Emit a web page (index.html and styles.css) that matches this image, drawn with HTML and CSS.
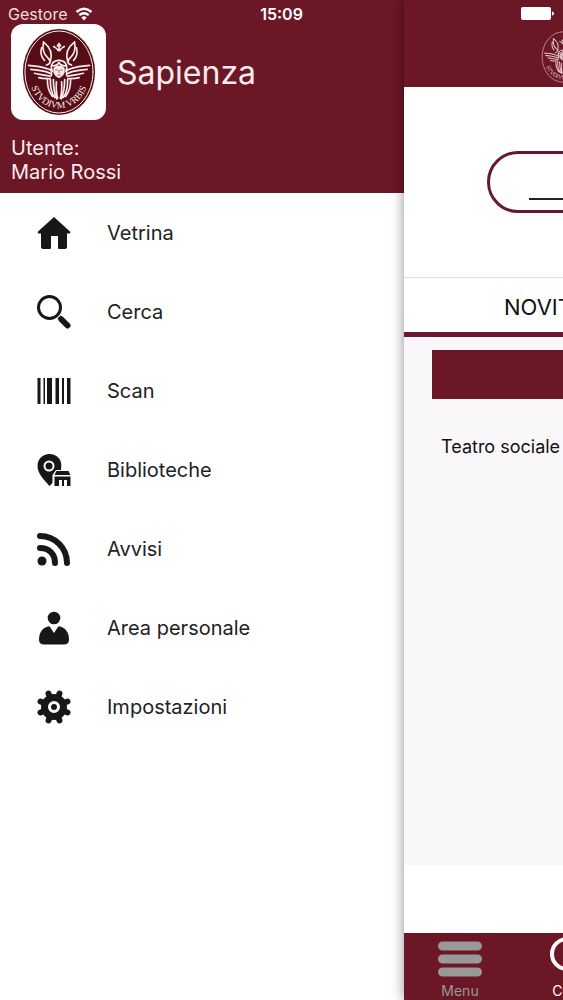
FILE: index.html
```html
<!DOCTYPE html>
<html lang="it">
<head>
    <meta charset="UTF-8">
    <meta name="viewport" content="width=device-width, initial-scale=1.0">
    <title>Sapienza</title>
    <link rel="stylesheet" href="styles.css">
</head>
<body>
    <div class="status-bar">
        <span class="carrier">Gestore
            <svg width="18" height="14" viewBox="0 0 18 14" aria-hidden="true">
                <path d="M1.500 5Q9-1.500 16.500 5M4.300 8.200q4.700-4 9.400 0" fill="none" stroke="currentColor" stroke-width="2.400"/>
                <path d="M6.300 10.400q2.700-2.200 5.400 0L9 13.400z" fill="currentColor"/>
            </svg>
        </span>
        <time>15:09</time>
        <svg class="battery" width="34" height="14" viewBox="0 0 34 14" aria-hidden="true">
            <rect width="30" height="13" rx="2" fill="currentColor"/>
            <path d="M31 4.500q2 0 2 2t-2 2z" fill="currentColor"/>
        </svg>
    </div>

    <div class="app">
        <aside class="drawer">
            <header class="drawer-header">
                <div class="brand">
                    <span class="brand-logo">
                        <svg viewBox="60 82 222 266" aria-hidden="true">
                            <g id="emblem">
                                <ellipse class="emblem-back" cx="171" cy="215" rx="109" ry="130"/>
                                <ellipse class="emblem-ring" cx="171" cy="215" rx="103" ry="124"/>
                                <g id="emblem-wing" class="emblem-line">
                                    <path d="M124 124c-4 22 0 36 12 47s10 20-3 23M127 127c18 14 24 34 18 55M118 142c-4 18 0 29 9 38"/>
                                    <path d="M79 195c24 3 50 3 72 17M86 207c20 3 42 3 60 13M97 219c16 5 32 4 49 9M110 232c12 4 22 3 34 3"/>
                                    <path d="M136 238c-1 21 4 36 15 51M145 238c-1 23 4 41 13 54M154 238c0 24 3 42 10 58M163 245c-1 18 0 35 4 49"/>
                                    <path d="M147 207c-1-16 7-27 24-27M151 196c8 2 15-2 20-9M150 207c-5 7 0 12-2 18"/>
                                </g>
                                <use href="#emblem-wing" transform="matrix(-1 0 0 1 342 0)"/>
                                <path class="emblem-line" d="M171 150v-20m-5 6 5-7 5 7M168 150c-2-7-7-8-13-12m19 12c2-7 7-8 13-12"/>
                                <path class="emblem-face" d="M154 203q17-15 34 0v13q-3 12-17 18-14-6-17-18z"/>
                                <path class="emblem-features" d="M160 209h7m8 0h7m-11 0v9m-5 6h10"/>
                                <path id="motto-path" fill="none" d="M82 240C102 353 240 353 260 240"/>
                                <text class="emblem-motto"><textPath href="#motto-path" startOffset="50%">STVDIVM VRBIS</textPath></text>
                            </g>
                        </svg>
                    </span>
                    <h1>Sapienza</h1>
                </div>
                <p class="user">Utente:<br>Mario Rossi</p>
            </header>
            <nav>
                <ul class="menu">
                    <li><a href="#vetrina">
                        <svg viewBox="0 0 34 34"><path d="M17 1 33 15.500q1 2-1 2h-2V31q0 2-2 2h-6q-1 0-1-1V20h-7v12q0 1-1 1H6q-2 0-2-2V17.500H2q-2 0-1-2z"/></svg>
                        Vetrina</a></li>
                    <li><a href="#cerca">
                        <svg viewBox="0 0 34 34"><circle cx="12.500" cy="12.500" r="11" fill="none" stroke="currentColor" stroke-width="3"/><path d="m24.500 24.500 6 6" stroke="currentColor" stroke-width="6" stroke-linecap="round"/><path d="m20.500 23.500 3-3 2 2-3 3z"/></svg>
                        Cerca</a></li>
                    <li><a href="#scan">
                        <svg viewBox="0 0 34 34"><path d="M.5 4h3v26h-3zM6.500 4H8v26H6.500zM10 4h5v26h-5zM18.500 4H22v26h-3.500zM25 4h2v26h-2zM30 4h3.500v26H30z"/></svg>
                        Scan</a></li>
                    <li><a href="#biblioteche">
                        <svg viewBox="0 0 34 34"><path fill-rule="evenodd" d="M12.500 1C5.500 1 .5 6 .5 13c0 8 7 14 12 20 2-2 3-3 3-4v-7l3.500-5h5l.3-4C24.800 6 19.500 1 12.500 1zm-.5 6.500a5.500 5.500 0 1 0 0 11 5.500 5.500 0 0 0 0-11z"/><circle cx="12" cy="13" r="3.500"/><path d="M19.500 18h12l2 4H17.500zM17.500 23.500h16V33H30v-6h-3v6h-2v-6h-3v6h-4.500z"/></svg>
                        Biblioteche</a></li>
                    <li><a href="#avvisi">
                        <svg viewBox="0 0 34 34"><path d="M3 4c15 0 27 12 27 27M3 16c9 0 15 6 15 15" fill="none" stroke="currentColor" stroke-width="6" stroke-linecap="round"/><circle cx="5" cy="29" r="4.500"/></svg>
                        Avvisi</a></li>
                    <li><a href="#area-personale">
                        <svg viewBox="0 0 34 34"><circle cx="17" cy="7" r="6.300"/><path d="M11 15.500q1-.5 2 .5l4 6 4-6q1-1 2-.5c6 1.500 9 6.500 9 13q0 5-5 5H7q-5 0-5-5c0-6.500 3-11.500 9-13z"/></svg>
                        Area personale</a></li>
                    <li><a href="#impostazioni">
                        <svg viewBox="0 0 34 34"><path d="M13 7.500 11.500 3.500M21 26.500l1.500 4M7.500 21l-4 1.500M26.500 13l4-1.500M21 7.500l1.500-4M13 26.500l-1.500 4M7.500 13l-4-1.500M26.500 21l4 1.500" stroke="currentColor" stroke-width="6" stroke-linecap="round"/><circle cx="17" cy="17" r="9.500" fill="none" stroke="currentColor" stroke-width="7"/><circle cx="17" cy="17" r="3"/></svg>
                        Impostazioni</a></li>
                </ul>
            </nav>
        </aside>

        <main class="page">
            <header class="page-header">
                <svg class="page-emblem" viewBox="60 82 222 266" aria-hidden="true"><use href="#emblem"/></svg>
            </header>
            <form class="search">
                <div class="search-box"><input type="search" aria-label="Cerca"></div>
            </form>
            <div class="page-tabs"><button type="button">NOVITÀ</button></div>
            <section class="content">
                <div class="banner"></div>
                <p>Teatro sociale</p>
            </section>
            <nav class="tab-bar">
                <a href="#menu">
                    <svg viewBox="0 0 44 36"><path d="M4.500 5h35M4.500 18h35M4.500 31h35" stroke="currentColor" stroke-width="9" stroke-linecap="round"/></svg>
                    Menu</a>
                <a class="active" href="#cerca">
                    <svg viewBox="0 0 44 36"><circle cx="17" cy="13" r="15" fill="none" stroke="currentColor" stroke-width="4"/><path d="m30 26 7 7" stroke="currentColor" stroke-width="7" stroke-linecap="round"/></svg>
                    Cerca</a>
            </nav>
        </main>
    </div>
</body>
</html>
```
FILE: styles.css
```css
* {
    box-sizing: border-box;
}
body {
    margin: 0;
    font-family: Inter, "Liberation Sans", sans-serif;
    color: #222;
    background: #fff;
}
h1, p, ul {
    margin: 0;
    padding: 0;
}
a {
    color: inherit;
    text-decoration: none;
}
.status-bar {
    position: absolute;
    top: 0;
    left: 0;
    right: 0;
    z-index: 3;
    display: grid;
    grid-template-columns: 1fr auto 1fr;
    align-items: center;
    height: 28px;
    padding: 0 8px;
    color: #fff;
    font-size: 16px;
}
.carrier {
    display: flex;
    align-items: center;
    gap: 8px;
    color: #f3dcdf;
}
.carrier svg {
    color: #fff;
}
.status-bar time {
    font-weight: 600;
}
.battery {
    justify-self: end;
}
.app {
    display: grid;
    grid-template-columns: minmax(0, 1fr) 159px;
    min-height: 100vh;
    overflow: hidden;
}
.drawer-header {
    height: 193px;
    padding: 24px 11px 0;
    color: #fcebec;
    background: #6b1726;
}
.brand {
    display: flex;
    align-items: center;
    gap: 11px;
}
.brand-logo {
    display: flex;
    align-items: center;
    justify-content: center;
    width: 95px;
    height: 96px;
    border-radius: 12px;
    background: #fff;
}
.brand-logo svg {
    width: 74px;
    height: 88px;
}
.emblem-back {
    fill: var(--emblem-back, #570d16);
}
.emblem-ring,
.emblem-line {
    fill: none;
    stroke: currentColor;
    stroke-width: 5;
    stroke-linecap: round;
}
.emblem-ring {
    stroke-width: 3;
}
.emblem-face {
    fill: currentColor;
}
.emblem-features {
    fill: none;
    stroke: #570d16;
    stroke-width: 2;
}
.emblem-motto {
    fill: currentColor;
    font-family: "Liberation Serif", serif;
    font-size: 29px;
    text-anchor: middle;
}
h1 {
    font-size: 32px;
    font-weight: 400;
}
.user {
    margin-top: 16px;
    font-size: 20px;
    line-height: 24px;
}
.menu {
    list-style: none;
}
.menu a {
    display: flex;
    align-items: center;
    gap: 36px;
    height: 79px;
    padding-left: 37px;
    font-size: 20px;
}
.menu svg {
    width: 34px;
    height: 34px;
    color: #171717;
    fill: currentColor;
}
.page {
    position: relative;
    z-index: 1;
    display: flex;
    flex-direction: column;
    min-width: 0;
    background: #fff;
    box-shadow: 0 0 12px rgba(0, 0, 0, 0.45);
}
.page-header {
    height: 87px;
    padding: 30px 0 0 136px;
    overflow: hidden;
    color: #e6c5ca;
    background: #6b1726;
    --emblem-back: #6b1726;
}
.page-emblem {
    width: 46px;
    height: 54px;
}
.search {
    height: 191px;
    padding: 64px 0 0 83px;
    border-bottom: 1px solid #ddd;
    overflow: hidden;
}
.search-box {
    width: 396px;
    height: 62px;
    padding: 12px 39px;
    border: 3px solid #6b1732;
    border-radius: 31px;
}
.search input {
    width: 100%;
    height: 34px;
    padding: 0;
    border: 0;
    border-bottom: 2px solid #222;
    outline: none;
    background: none;
    font: inherit;
}
.page-tabs {
    height: 59px;
    border-bottom: 5px solid #6b1732;
    overflow: hidden;
}
.page-tabs button {
    height: 58px;
    padding: 0 0 0 100px;
    border: 0;
    color: #111;
    background: none;
    font: inherit;
    font-size: 22px;
}
.content {
    flex: 1;
    padding: 13px 0 0 28px;
    margin-bottom: 68px;
    overflow: hidden;
    background: #f9f7fa;
}
.banner {
    height: 49px;
    background: #6b1726;
}
.content p {
    padding: 36px 0 0 9px;
    color: #111;
    font-size: 18px;
    line-height: 24px;
    white-space: nowrap;
}
.tab-bar {
    display: flex;
    height: 67px;
    overflow: hidden;
    color: #999;
    background: #6b1726;
}
.tab-bar a {
    display: flex;
    flex: 0 0 112px;
    flex-direction: column;
    align-items: center;
    gap: 6px;
    padding-top: 8px;
    font-size: 14px;
    line-height: 16px;
}
.tab-bar svg {
    width: 44px;
    height: 36px;
    overflow: visible;
}
.tab-bar .active {
    color: #fff;
}
```
